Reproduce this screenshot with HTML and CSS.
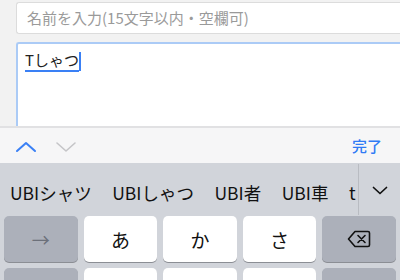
FILE: index.html
```html
<!DOCTYPE html>
<html lang="ja">
<head>
    <meta charset="UTF-8">
    <meta name="viewport" content="width=device-width, initial-scale=1.0">
    <title>名前入力</title>
    <link rel="stylesheet" href="styles.css">
</head>
<body>
  <div class="page">
    <div class="form">
        <div class="field">名前を入力(15文字以内・空欄可)</div>
        <div class="area"><span class="marked">Tしゃつ</span><span class="caret"></span></div>
    </div>

    <div class="toolbar">
        <div class="nav">
            <svg class="chev" width="22" height="12" viewBox="0 0 22 12"><path d="M2 10 L11 2 L20 10" fill="none" stroke="#3a80f5" stroke-width="2" stroke-linecap="round" stroke-linejoin="round"/></svg>
            <svg class="chev" width="22" height="12" viewBox="0 0 22 12"><path d="M2 2 L11 10 L20 2" fill="none" stroke="#c5c5c8" stroke-width="1.6" stroke-linecap="round" stroke-linejoin="round"/></svg>
        </div>
        <span class="done">完了</span>
    </div>

    <div class="keyboard">
        <div class="candidates">
            <span class="cand">UBIシャツ</span>
            <span class="cand">UBIしゃつ</span>
            <span class="cand">UBI者</span>
            <span class="cand">UBI車</span>
            <span class="cand last">t</span>
            <span class="more">
                <svg width="16" height="9" viewBox="0 0 16 9"><path d="M1.5 1.5 L8 7.5 L14.5 1.5" fill="none" stroke="#111" stroke-width="1.7" stroke-linecap="round" stroke-linejoin="round"/></svg>
            </span>
        </div>
        <div class="keys">
            <div class="key fn arrow">→</div>
            <div class="key">あ</div>
            <div class="key">か</div>
            <div class="key">さ</div>
            <div class="key fn">
                <svg width="24" height="18" viewBox="0 0 24 18"><path d="M8 1.5 H21 a1.5 1.5 0 0 1 1.5 1.5 V15 a1.5 1.5 0 0 1 -1.5 1.5 H8 L1.5 9 Z" fill="none" stroke="#111" stroke-width="1.6" stroke-linejoin="round"/><path d="M11 5.5 L18 12.5 M18 5.5 L11 12.5" stroke="#111" stroke-width="1.6" stroke-linecap="round"/></svg>
            </div>
            <div class="key fn"></div>
            <div class="key"></div>
            <div class="key"></div>
            <div class="key"></div>
            <div class="key fn"></div>
        </div>
    </div>
  </div>
</body>
</html>
```

FILE: styles.css
```css
html, body {
    margin: 0;
    padding: 0;
    width: 400px;
    height: 280px;
    overflow: hidden;
}
body {
    font-family: "Noto Sans CJK JP", "Noto Sans", sans-serif;
    background-color: #f2f2f2;
}
.form {
    padding: 2px 0 0 16px;
    background-color: #f2f2f2;
    height: 126px;
    box-sizing: border-box;
}
.field {
    width: 400px;
    height: 32px;
    box-sizing: border-box;
    background-color: #fff;
    border: 1px solid #dcdcdc;
    border-right: none;
    border-radius: 3px 0 0 3px;
    padding: 0 0 0 10px;
    font-size: 15px;
    line-height: 30px;
    color: #9a9a9a;
}
.area {
    margin-top: 8px;
    width: 400px;
    height: 86px;
    box-sizing: border-box;
    background-color: #fff;
    border: 2px solid #abcbf6;
    border-right: none;
    border-bottom: none;
    border-radius: 3px 0 0 0;
    padding: 7px 0 0 7px;
    font-size: 15px;
    line-height: 18px;
    color: #222;
}
.marked {
    border-bottom: 2px solid #3a80f5;
}
.caret {
    display: inline-block;
    width: 2px;
    height: 19px;
    background-color: #3a80f5;
    vertical-align: -5px;
}
.toolbar {
    height: 37px;
    box-sizing: border-box;
    border-top: 2px solid #e1e1e3;
    background-color: #f6f6f7;
    display: flex;
    align-items: center;
    justify-content: space-between;
    padding: 0 18px 0 15px;
}
.nav {
    display: flex;
    gap: 18px;
    padding-top: 3px;
}
.done {
    color: #2f7bf5;
    font-size: 15px;
    font-weight: 500;
}
.keyboard {
    background-color: #d1d4da;
    height: 117px;
    overflow: hidden;
}
.candidates {
    height: 53px;
    display: flex;
    align-items: center;
    padding: 6px 0 0 10px;
    box-sizing: border-box;
    font-family: "Noto Sans CJK JP", sans-serif;
    font-size: 17.5px;
    color: #111;
}
.cand {
    margin-right: 20.5px;
}
.cand.last {
    margin-right: 0;
    padding-right: 2px;
    border-right: 1px solid #b9bcc2;
    height: 45px;
    line-height: 45px;
    margin-top: -6px;
    padding-top: 6px;
}
.more {
    padding-left: 13px;
    padding-bottom: 10px;
}
.keys {
    display: grid;
    grid-template-columns: repeat(5, 1fr);
    gap: 6px 6px;
    padding: 0 4px;
}
.key {
    height: 46px;
    background-color: #fff;
    border-radius: 5px;
    box-shadow: 0 1px 0 #8b8e94;
    display: flex;
    align-items: center;
    justify-content: center;
    font-size: 19px;
    color: #111;
}
.key.fn {
    background-color: #acb0ba;
}
.key.arrow {
    color: #6c707a;
    font-size: 18px;
}
```
